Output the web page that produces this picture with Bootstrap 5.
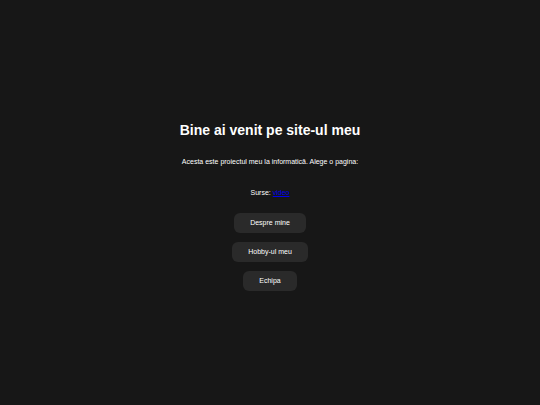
<!DOCTYPE html>
<html lang="ro">
<head>
  <meta charset="UTF-8">
  <meta name="viewport" content="width=device-width, initial-scale=1">
  <title>Proiect informatică</title>
  <link href="https://cdn.jsdelivr.net/npm/bootstrap@5.3.0/dist/css/bootstrap.min.css" rel="stylesheet">

  <style>
    body {
      background-color: #171717;
      color: #fff;
      font-family: "Liberation Sans", Arial, sans-serif;
      font-size: 7px;
      line-height: 8px;
    }

    main {
      padding-top: 7px;
    }

    h1 {
      font-size: 14px;
      font-weight: bold;
      line-height: 18px;
      margin-bottom: 19px;
    }

    p {
      margin-bottom: 23px;
    }

    .surse {
      margin-bottom: 16px;
    }

    .surse a {
      color: #0000ee;
    }

    .meniu {
      gap: 9px;
    }

    .buton {
      --bs-btn-color: #fff;
      --bs-btn-bg: #2a2a2a;
      --bs-btn-hover-color: #fff;
      --bs-btn-hover-bg: #3a3a3a;
      --bs-btn-border-width: 0;
      --bs-btn-border-radius: 6px;
      --bs-btn-font-size: 7px;
      --bs-btn-line-height: 8px;
      --bs-btn-padding-x: 16px;
      --bs-btn-padding-y: 6px;
    }
  </style>
</head>
<body>

  <main class="min-vh-100 d-flex flex-column justify-content-center align-items-center text-center">
    <h1>Bine ai venit pe site-ul meu</h1>
    <p>Acesta este proiectul meu la informatică. Alege o pagina:</p>
    <p class="surse">Surse: <a href="#">video</a></p>

    <div class="meniu d-flex flex-column align-items-center">
      <button type="button" class="btn buton">Despre mine</button>
      <button type="button" class="btn buton">Hobby-ul meu</button>
      <button type="button" class="btn buton">Echipa</button>
    </div>
  </main>

  <script src="https://cdn.jsdelivr.net/npm/bootstrap@5.3.0/dist/js/bootstrap.bundle.min.js"></script>
</body>
</html>
